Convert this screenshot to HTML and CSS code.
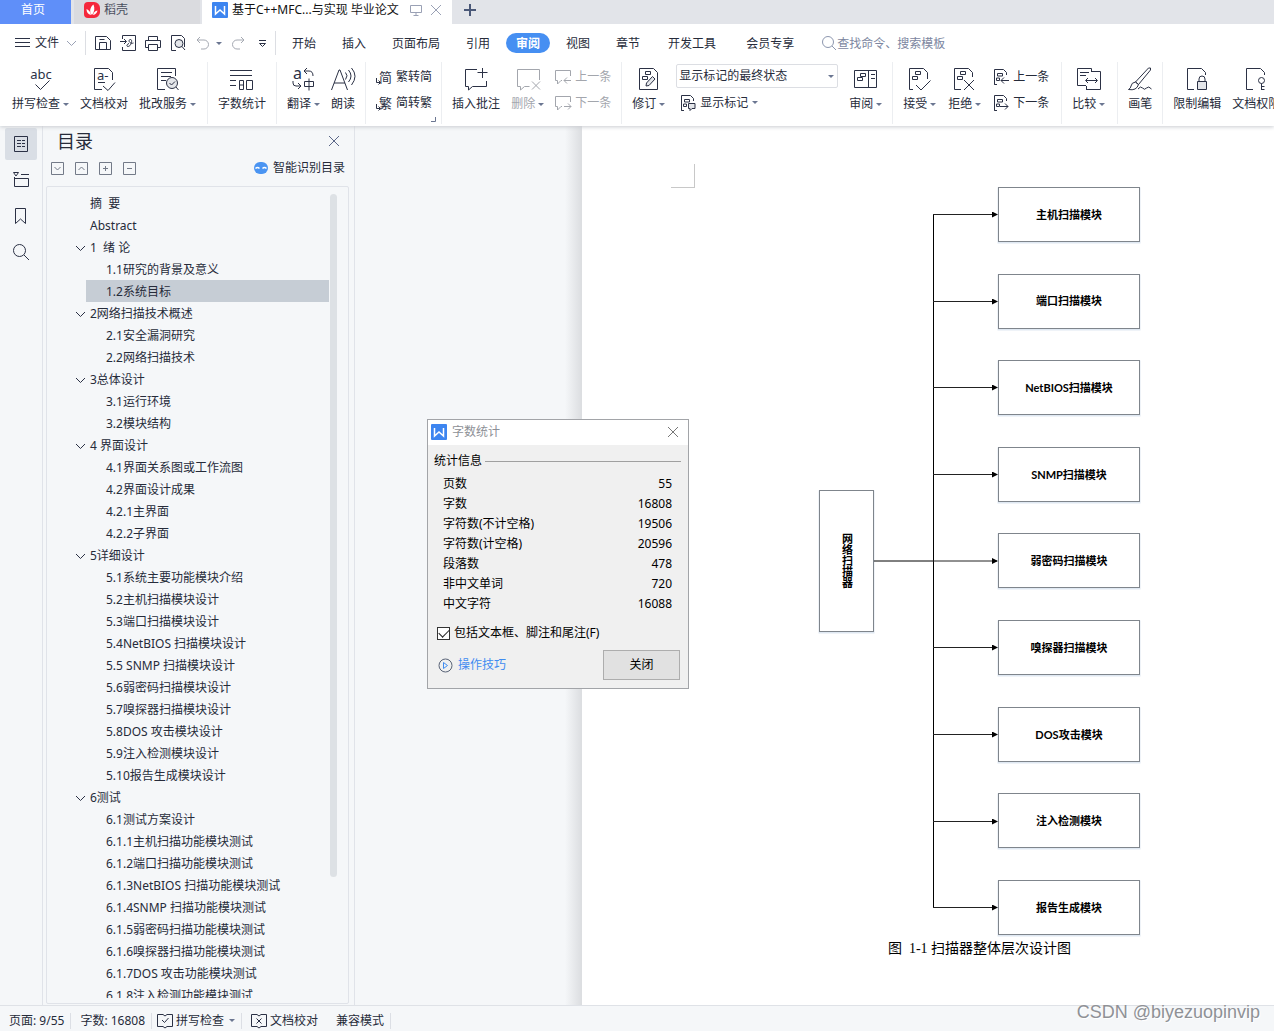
FILE: index.html
```html
<!DOCTYPE html>
<html lang="zh-CN">
<head>
<meta charset="utf-8">
<title>字数统计</title>
<link rel="stylesheet" href="styles.css">
</head>
<body>
<svg class="sprite" aria-hidden="true">
  <symbol id="doc-in" viewBox="0 0 16 16"><path d="M3 15.500H1.500V.5H10.500l3 3V6M1.500 15.500H4M4.500 4.500h5v2.500h-5zM3.500 9h3v2.500h-3z"/></symbol>
  <symbol id="close" viewBox="0 0 12 12"><path d="M1 1l10 10M11 1L1 11"/></symbol>
  <symbol id="chevron" viewBox="0 0 11 11"><path d="M1 3l4.500 4.500L10 3"/></symbol>
  <symbol id="logo" viewBox="0 0 16 16"><rect width="16" height="16" rx="1" fill="#3d85f0" stroke="none"/><path d="M3.500 4v8l4.500-4 4.500 4V4" stroke="#fff" stroke-width="1.500"/></symbol>
  <symbol id="bubble" viewBox="0 0 16 16"><path d="M15.500 7V1.500H.5v10h2v3.500l3.500-3.500h1"/></symbol>
</svg>

<header>
  <div class="tabs">
    <button class="tab home">首页</button>
    <button class="tab docer"><svg width="16" height="16" viewBox="0 0 16 16"><path d="M4 0h6a6 6 0 0 1 6 6v4a6 6 0 0 1-6 6H4a4 4 0 0 1-4-4V4a4 4 0 0 1 4-4z" fill="#f5283c" stroke="none"/><path d="M8 13C5 10 6 5 9.500 2.500 11 6 10.500 10 8 13zM7 13C4 12.500 2.500 10 2.500 7 5 8 6.500 10 7 13zM9 13c.5-2.500 2-4 4.500-4.500C13 11 11.500 12.500 9 13z" fill="#fff" stroke="none"/></svg>稻壳</button>
    <div class="tab doc"><svg width="16" height="16"><use href="#logo"/></svg><span class="doc-name">基于C++MFC...与实现 毕业论文</span><svg class="faint" width="12" height="12" viewBox="0 0 12 12"><path d="M.5 1.500h11v7H.5zM6 8.500v3M3.500 11.500h5"/></svg><button class="icon-btn tab-close" aria-label="关闭标签"><svg class="faint" width="12" height="12"><use href="#close"/></svg></button></div>
    <button class="icon-btn new-tab" aria-label="新建"><svg width="12" height="12" viewBox="0 0 12 12"><path d="M6 0v12M0 6h12" stroke="#4a5878" stroke-width="2"/></svg></button>
  </div>

  <div class="menubar">
    <button class="file"><svg width="15" height="12" viewBox="0 0 15 12"><path d="M0 1.500h15M0 5.500h15M0 9.500h15"/></svg>文件<svg class="faint file-arrow" width="11" height="11"><use href="#chevron"/></svg></button>
    <div class="quick">
      <button class="icon-btn" aria-label="保存"><svg width="16" height="16" viewBox="0 0 16 16"><path d="M.5 1.500h11l4 4v9H.5zM4.500 14V7.500h7V14M4.500 4.500h5"/></svg></button>
      <button class="icon-btn" aria-label="输出为PDF"><svg width="16" height="16" viewBox="0 0 16 16"><path d="M2.500 4V.5h13v15h-13V12M0 6.500h6M4 4l2.500 2.500L4 9M8 11.500c3 0 5-7 2.500-7-3 0-1 5 3 3.500M8 11.500c-2 0-1-2.500 1-3"/></svg></button>
      <button class="icon-btn" aria-label="打印"><svg width="16" height="16" viewBox="0 0 16 16"><path d="M3.500 5V1.500h9V5M3.500 12.500h-3v-7h15v7h-3M3.500 9.500h9v6h-9z"/></svg></button>
      <button class="icon-btn" aria-label="打印预览"><svg width="16" height="16" viewBox="0 0 16 16"><path d="M6 15.500H1.500V.5h10l3 3V12"/><circle cx="9" cy="8.500" r="4" fill="#e4e6ea"/><path d="M12 11.500l3 3.500"/></svg></button>
      <button class="icon-btn undo" aria-label="撤销"><svg class="dim" width="14" height="14" viewBox="0 0 14 14"><path d="M4 1L1 4l3 3M1 4h7a4.500 4.500 0 0 1 0 9H5"/></svg><i class="caret"></i></button>
      <button class="icon-btn" aria-label="恢复"><svg class="dim" width="14" height="14" viewBox="0 0 14 14"><path d="M10 1l3 3-3 3M13 4H6a4.500 4.500 0 0 0 0 9h3"/></svg></button>
      <button class="icon-btn more" aria-label="自定义"><svg width="9" height="9" viewBox="0 0 9 9"><path d="M1 1.500h7M1.500 4.500h6l-3 3z"/></svg></button>
    </div>
    <nav>
      <a href="#">开始</a><a href="#">插入</a><a href="#">页面布局</a><a href="#">引用</a><a href="#" class="current">审阅</a><a href="#">视图</a><a href="#">章节</a><a href="#" class="wide">开发工具</a><a href="#" class="wide">会员专享</a>
    </nav>
    <label class="search"><svg width="16" height="16" viewBox="0 0 16 16"><circle cx="7" cy="7" r="5.500"/><path d="M11 11l4 4"/></svg><input type="text" placeholder="查找命令、搜索模板" aria-label="查找命令"></label>
  </div>

  <div class="ribbon">
    <div class="group first">
      <button class="big"><svg width="24" height="24" viewBox="0 0 24 24"><text x="12" y="12" text-anchor="middle" class="glyph">abc</text><path d="M6.500 17.500l5 5 9-9"/></svg><span>拼写检查<i class="caret"></i></span></button>
      <button class="big"><svg width="24" height="24" viewBox="0 0 24 24"><text x="5" y="13" class="glyph">a-</text><path d="M10 22.500H2.500v-21h14l4 4V13M6 15.500h7M11 19l5 4.500 7-8"/></svg><span>文档校对</span></button>
      <button class="big"><svg width="24" height="24" viewBox="0 0 24 24"><path d="M9 22.500H1.500v-21h18V9M5 5.500h11M5 9.500h10M5 13.500h5"/><circle cx="16" cy="16" r="5.500" fill="#e4e6ea"/><path d="M20 20l2.500 3M13.500 16l2 2 3.500-3.500"/></svg><span>批改服务<i class="caret"></i></span></button>
    </div>
    <div class="group">
      <button class="big"><svg width="24" height="24" viewBox="0 0 24 24"><path d="M0 3.500h22M0 8.500h22M0 13.500h6M0 18.500h6M9.500 13.500h4v9h-4zM9.500 18h4M16.500 13.500h6v9h-6z"/></svg><span>字数统计</span></button>
    </div>
    <div class="group">
      <button class="big"><svg width="24" height="24" viewBox="0 0 24 24"><text x="1" y="12" class="glyph wide-a">a</text><path d="M15 1l-3 3 3 3M12 4h5q4 0 4 5M1 14v2q0 3 3 3h4M6 16l3 3-3 3M12.500 14.500h9v5h-9zM17 11.500v12"/></svg><span>翻译<i class="caret"></i></span></button>
      <button class="big"><svg width="24" height="24" viewBox="0 0 24 24"><path d="M.5 23l7.500-20h1l7.500 20M3 16h11M14.500 5.500q3 3 0 7M17.500 3q5 6 0 12M20.500 1q7 8 0 17"/></svg><span>朗读</span></button>
    </div>
    <div class="group convert">
      <div class="stack">
        <button class="small"><svg width="16" height="16" viewBox="0 0 16 16"><text x="3" y="13" class="han">简</text><path d="M.5 9v4.500H4M2.500 11.500l2 2-2 2"/></svg>繁转简</button>
        <button class="small"><svg width="16" height="16" viewBox="0 0 16 16"><text x="3" y="13" class="han">繁</text><path d="M.5 9v4.500H4M2.500 11.500l2 2-2 2"/></svg>简转繁</button>
      </div>
      <button class="icon-btn launcher" aria-label="更多设置"><svg width="6" height="6" viewBox="0 0 6 6"><path d="M0 4.500h4.500V0"/></svg></button>
    </div>
    <div class="group">
      <button class="big"><svg width="24" height="24" viewBox="0 0 24 24"><path d="M13 2.500H1.500v17h3v3.500l4-3.500h14V14M18.500 1v10M13.500 5.500h10"/></svg><span>插入批注</span></button>
      <button class="big off"><svg width="24" height="24" viewBox="0 0 24 24"><path d="M23.500 13V2.500h-22v17h3v3.500l4-3.500h5M16 14.500l8 8M24 14.500l-8 8"/></svg><span>删除<i class="caret"></i></span></button>
      <div class="stack">
        <button class="small off"><svg width="16" height="16" viewBox="0 0 16 16"><use href="#bubble"/><path d="M16 11.500H9M12 8.500l-3 3 3 3"/></svg>上一条</button>
        <button class="small off"><svg width="16" height="16" viewBox="0 0 16 16"><use href="#bubble"/><path d="M9 11.500h7M13 8.500l3 3-3 3"/></svg>下一条</button>
      </div>
    </div>
    <div class="group">
      <button class="big"><svg width="24" height="24" viewBox="0 0 24 24"><path d="M2.500 1.500h14l4 4v17h-18zM8.500 4.500h5v3h-5zM5.500 9.500h5v3h-5z"/><path d="M9 19l.5-3 6-6.500 2.500 2.500-6 6.500z" fill="#e4e6ea"/></svg><span>修订<i class="caret"></i></span></button>
      <div class="stack">
        <div class="select"><select aria-label="显示状态"><option>显示标记的最终状态</option></select><i class="caret"></i></div>
        <button class="small markup"><svg width="16" height="16" viewBox="0 0 16 16"><use href="#doc-in"/><path d="M8.500 8.500h6.500v5h-3l-2 2v-2H8.500z" fill="#e4e6ea"/></svg>显示标记<i class="caret"></i></button>
      </div>
      <button class="big"><svg width="24" height="24" viewBox="0 0 24 24"><path d="M.5 3.500h22v17H.5zM14.500 3.500v17M6.500 6.500h5v3h-5zM3.500 10.500h5v3h-5zM17 7.500h4M17 11.500h4"/></svg><span>审阅<i class="caret"></i></span></button>
    </div>
    <div class="group roomy">
      <button class="big"><svg width="24" height="24" viewBox="0 0 24 24"><path d="M5 22.500H1.500v-21h14l4 4V12M7.500 4.500h5v3h-5zM4.500 9.500h5v3h-5zM8 18l5 5 9.500-9.500"/></svg><span>接受<i class="caret"></i></span></button>
      <button class="big"><svg width="24" height="24" viewBox="0 0 24 24"><path d="M8 22.500H1.500v-21h14l4 4V10M7.500 4.500h5v3h-5zM4.500 9.500h5v3h-5zM11 13l10 10M21 13L11 23"/></svg><span>拒绝<i class="caret"></i></span></button>
      <div class="stack">
        <button class="small"><svg width="16" height="16" viewBox="0 0 16 16"><use href="#doc-in"/><path d="M16 11.500H8M11 8.500l-3 3 3 3"/></svg>上一条</button>
        <button class="small"><svg width="16" height="16" viewBox="0 0 16 16"><use href="#doc-in"/><path d="M7 11.500h8M12 8.500l3 3-3 3"/></svg>下一条</button>
      </div>
    </div>
    <div class="group roomy">
      <button class="big"><svg width="24" height="24" viewBox="0 0 24 24"><path d="M9 18.500H.5v-17h14V5M9 22.500h14.500V4.500H15M9.500 22.500V19M3 5.500h9M3 8.500h6M9 13.500h11M11 11l-2.500 2.500L11 16M18 11l2.500 2.500L18 16"/></svg><span>比较<i class="caret"></i></span></button>
    </div>
    <div class="group">
      <button class="big"><svg width="24" height="24" viewBox="0 0 24 24"><path d="M7.500 15L20.500 1q3-1 2 2L10.500 17.500zM7.500 15q-4 .5-4.500 4 0 2-2.500 3.500 8 1.500 10-5zM10 22q2.500-3.500 4.500-1t4 0 5 1"/></svg><span>画笔</span></button>
    </div>
    <div class="group last">
      <button class="big"><svg width="24" height="24" viewBox="0 0 24 24"><path d="M9 22.500H2.500v-21h14l4 4V8"/><path d="M12.500 14.500h9v8h-9z" fill="#e4e6ea"/><path d="M14 14.500V12a3 3 0 0 1 6 0v2.500"/></svg><span>限制编辑</span></button>
      <button class="big"><svg width="24" height="24" viewBox="0 0 24 24"><path d="M9 22.500H2.500v-21h14l4 4V8"/><circle cx="17.500" cy="13.500" r="3"/><path d="M17.500 16.500V23M17.500 19.500h3M17.500 22.500h3"/></svg><span>文档权限</span></button>
    </div>
  </div>
</header>

<main>
  <aside class="rail">
    <button class="icon-btn active" aria-label="目录"><svg width="16" height="16" viewBox="0 0 16 16"><path d="M1.500.5h13v15h-13zM4 4.500h4M9 4.500h3M4 7.500h4M9 7.500h3M4 10.500h4M9 10.500h3"/></svg></button>
    <button class="icon-btn" aria-label="章节"><svg width="16" height="16" viewBox="0 0 16 16"><path d="M.5.5h5L3 4zM8 2.500h8M1.500 5v9.500h14v-8h-14"/></svg></button>
    <button class="icon-btn" aria-label="书签"><svg width="16" height="16" viewBox="0 0 16 16"><path d="M2.500.5h10v15l-5-4.500-5 4.500z"/></svg></button>
    <button class="icon-btn" aria-label="查找"><svg width="16" height="16" viewBox="0 0 16 16"><circle cx="6.500" cy="6.500" r="6"/><path d="M11 11l5 5"/></svg></button>
  </aside>

  <section class="outline">
    <div class="outline-head"><h2>目录</h2><button class="icon-btn" aria-label="关闭目录"><svg width="12" height="12"><use href="#close"/></svg></button></div>
    <div class="outline-tools">
      <button class="icon-btn" aria-label="展开"><svg width="13" height="13" viewBox="0 0 13 13"><path d="M.5.5h12v12H.5zM3.500 5l3 3 3-3"/></svg></button>
      <button class="icon-btn" aria-label="收起"><svg width="13" height="13" viewBox="0 0 13 13"><path d="M.5.5h12v12H.5zM3.500 8l3-3 3 3"/></svg></button>
      <button class="icon-btn" aria-label="增加"><svg width="13" height="13" viewBox="0 0 13 13"><path d="M.5.5h12v12H.5zM4 6.500h5M6.500 4v5"/></svg></button>
      <button class="icon-btn" aria-label="减少"><svg width="13" height="13" viewBox="0 0 13 13"><path d="M.5.5h12v12H.5zM4 6.500h5"/></svg></button>
      <button class="smart"><svg width="14" height="12" viewBox="0 0 14 12"><rect width="14" height="12" rx="6" fill="#4a94f2" stroke="none"/><path d="M1.500 6.500q2-2 4 0M8.500 6.500q2-2 4 0" stroke="#fff" stroke-width="1.500"/></svg>智能识别目录</button>
    </div>
    <div class="tree-box">
      <ul class="tree">
        <li><a href="#">摘&nbsp; 要</a></li>
        <li><a href="#">Abstract</a></li>
        <li class="open"><svg width="11" height="11"><use href="#chevron"/></svg><a href="#">1&nbsp; 绪 论</a></li>
        <li class="sub"><a href="#">1.1研究的背景及意义</a></li>
        <li class="sub"><a href="#" class="selected">1.2系统目标</a></li>
        <li class="open"><svg width="11" height="11"><use href="#chevron"/></svg><a href="#">2网络扫描技术概述</a></li>
        <li class="sub"><a href="#">2.1安全漏洞研究</a></li>
        <li class="sub"><a href="#">2.2网络扫描技术</a></li>
        <li class="open"><svg width="11" height="11"><use href="#chevron"/></svg><a href="#">3总体设计</a></li>
        <li class="sub"><a href="#">3.1运行环境</a></li>
        <li class="sub"><a href="#">3.2模块结构</a></li>
        <li class="open"><svg width="11" height="11"><use href="#chevron"/></svg><a href="#">4 界面设计</a></li>
        <li class="sub"><a href="#">4.1界面关系图或工作流图</a></li>
        <li class="sub"><a href="#">4.2界面设计成果</a></li>
        <li class="sub"><a href="#">4.2.1主界面</a></li>
        <li class="sub"><a href="#">4.2.2子界面</a></li>
        <li class="open"><svg width="11" height="11"><use href="#chevron"/></svg><a href="#">5详细设计</a></li>
        <li class="sub"><a href="#">5.1系统主要功能模块介绍</a></li>
        <li class="sub"><a href="#">5.2主机扫描模块设计</a></li>
        <li class="sub"><a href="#">5.3端口扫描模块设计</a></li>
        <li class="sub"><a href="#">5.4NetBIOS 扫描模块设计</a></li>
        <li class="sub"><a href="#">5.5 SNMP 扫描模块设计</a></li>
        <li class="sub"><a href="#">5.6弱密码扫描模块设计</a></li>
        <li class="sub"><a href="#">5.7嗅探器扫描模块设计</a></li>
        <li class="sub"><a href="#">5.8DOS 攻击模块设计</a></li>
        <li class="sub"><a href="#">5.9注入检测模块设计</a></li>
        <li class="sub"><a href="#">5.10报告生成模块设计</a></li>
        <li class="open"><svg width="11" height="11"><use href="#chevron"/></svg><a href="#">6测试</a></li>
        <li class="sub"><a href="#">6.1测试方案设计</a></li>
        <li class="sub"><a href="#">6.1.1主机扫描功能模块测试</a></li>
        <li class="sub"><a href="#">6.1.2端口扫描功能模块测试</a></li>
        <li class="sub"><a href="#">6.1.3NetBIOS 扫描功能模块测试</a></li>
        <li class="sub"><a href="#">6.1.4SNMP 扫描功能模块测试</a></li>
        <li class="sub"><a href="#">6.1.5弱密码扫描功能模块测试</a></li>
        <li class="sub"><a href="#">6.1.6嗅探器扫描功能模块测试</a></li>
        <li class="sub"><a href="#">6.1.7DOS 攻击功能模块测试</a></li>
        <li class="sub"><a href="#">6.1.8注入检测功能模块测试</a></li>
      </ul>
      <div class="scroll"><div class="thumb"></div></div>
    </div>
  </section>

  <div class="desk"></div>

  <article class="page">
    <div class="corner"></div>
    <figure>
      <svg class="diagram" width="324" height="752" viewBox="0 0 324 752">
        <defs><marker id="arrow" markerUnits="userSpaceOnUse" markerWidth="6" markerHeight="6" refX="5" refY="3" orient="auto"><path d="M0 0l6 3-6 3z" class="tip"/></marker></defs>
        <g class="shade">
          <rect x="1.500" y="305.500" width="54" height="141"/>
          <rect x="180.500" y="2.500" width="141" height="54"/><rect x="180.500" y="89.500" width="141" height="54"/><rect x="180.500" y="175.500" width="141" height="54"/><rect x="180.500" y="262.500" width="141" height="54"/><rect x="180.500" y="348.500" width="141" height="54"/><rect x="180.500" y="435.500" width="141" height="54"/><rect x="180.500" y="522.500" width="141" height="54"/><rect x="180.500" y="608.500" width="141" height="54"/><rect x="180.500" y="695.500" width="141" height="54"/>
        </g>
        <g class="node">
          <rect x="1.500" y="304.500" width="54" height="141"/>
          <rect x="180.500" y="1.500" width="141" height="54"/><rect x="180.500" y="88.500" width="141" height="54"/><rect x="180.500" y="174.500" width="141" height="54"/><rect x="180.500" y="261.500" width="141" height="54"/><rect x="180.500" y="347.500" width="141" height="54"/><rect x="180.500" y="434.500" width="141" height="54"/><rect x="180.500" y="521.500" width="141" height="54"/><rect x="180.500" y="607.500" width="141" height="54"/><rect x="180.500" y="694.500" width="141" height="54"/>
        </g>
        <path class="trunk" d="M56 375h59.500M115.500 28v694"/>
        <g class="wire">
          <path d="M115 28.500h64"/><path d="M115 115.500h64"/><path d="M115 201.500h64"/><path d="M115 288.500h64"/><path d="M115 375h64"/><path d="M115 461.500h64"/><path d="M115 548.500h64"/><path d="M115 635.500h64"/><path d="M115 721.500h64"/>
        </g>
        <g class="names">
          <text x="29" y="375" class="upright">网络扫描器</text>
          <text x="251" y="33">主机扫描模块</text><text x="251" y="119">端口扫描模块</text><text x="251" y="206">NetBIOS扫描模块</text><text x="251" y="293">SNMP扫描模块</text><text x="251" y="379">弱密码扫描模块</text><text x="251" y="466">嗅探器扫描模块</text><text x="251" y="553">DOS攻击模块</text><text x="251" y="639">注入检测模块</text><text x="251" y="726">报告生成模块</text>
        </g>
      </svg>
      <figcaption>图&nbsp; 1-1 扫描器整体层次设计图</figcaption>
    </figure>
  </article>
</main>

<footer>
  <span class="cell">页面: 9/55</span>
  <span class="cell">字数: 16808</span>
  <button class="cell spell"><svg width="16" height="16" viewBox="0 0 16 16"><path d="M6 1.500H.5v12H6l2 1.500 2-1.500h5.500v-12H10L8 3 6 1.500zM5 7l2.500 2.500L11.500 5"/></svg>拼写检查<i class="caret"></i></button>
  <button class="cell proof"><svg width="16" height="16" viewBox="0 0 16 16"><path d="M6 1.500H.5v12H6l2 1.500 2-1.500h5.500v-12H10L8 3 6 1.500zM5.500 5.500l5 5M10.500 5.500l-5 5"/></svg>文档校对</button>
  <span class="cell mode">兼容模式</span>
</footer>

<div class="dialog" role="dialog" aria-labelledby="dialog-title">
  <div class="dialog-head"><svg width="16" height="16"><use href="#logo"/></svg><span id="dialog-title">字数统计</span><button class="icon-btn" aria-label="关闭窗口"><svg width="12" height="12"><use href="#close"/></svg></button></div>
  <div class="dialog-body">
    <div class="legend">统计信息</div>
    <table>
      <tr><th scope="row">页数</th><td>55</td></tr>
      <tr><th scope="row">字数</th><td>16808</td></tr>
      <tr><th scope="row">字符数(不计空格)</th><td>19506</td></tr>
      <tr><th scope="row">字符数(计空格)</th><td>20596</td></tr>
      <tr><th scope="row">段落数</th><td>478</td></tr>
      <tr><th scope="row">非中文单词</th><td>720</td></tr>
      <tr><th scope="row">中文字符</th><td>16088</td></tr>
    </table>
    <label class="include"><input type="checkbox" checked>包括文本框、脚注和尾注(F)</label>
    <div class="actions">
      <a href="#"><svg width="15" height="15" viewBox="0 0 15 15"><circle cx="7.500" cy="7.500" r="6.500" stroke="#5a6478"/><path d="M5.500 4.500v6l4-3z" stroke="#3f8cf0"/></svg>操作技巧</a>
      <button class="ok">关闭</button>
    </div>
  </div>
</div>

<div class="watermark">CSDN @biyezuopinvip</div>
</body>
</html>
```

FILE: styles.css
```css
* { box-sizing: border-box; }

body {
  margin: 0;
  height: 100vh;
  display: flex;
  flex-direction: column;
  overflow: hidden;
  position: relative;
  background: #f5f7f9;
  color: #262b3a;
  font: 12px/16px "Noto Sans", "Noto Sans CJK SC", sans-serif;
}

button, input, select { font: inherit; color: inherit; }
button { border: 0; padding: 0; background: none; white-space: nowrap; }
a { color: inherit; text-decoration: none; }
svg { display: block; flex: none; fill: none; stroke: #2b3145; stroke-width: 1; overflow: visible; }
.sprite { position: absolute; width: 0; height: 0; }
.icon-btn { display: flex; align-items: center; justify-content: center; flex: none; }
.faint { stroke: #9aa1b5; }
.dim { stroke: #a5a9b2; }

.caret {
  flex: none;
  width: 6px;
  border: solid transparent;
  border-width: 3px 3px 0;
  border-top-color: #6b7691;
}

/* Document tabs */
header { flex: none; background: #fff; position: relative; z-index: 1; box-shadow: 0 1px 4px #c9ccd1; }
.tabs { display: flex; height: 24px; background: #e2e4e9; }
.tab { display: flex; align-items: center; padding-bottom: 5px; height: 24px; }
.home { width: 71px; justify-content: center; padding-right: 5px; background: #5f8ff9; color: #fff; margin-right: 3px; }
.docer { width: 126px; padding-left: 10px; gap: 4px; background: #dadbdf; margin-right: 2px; color: #4a4f5e; }
.doc { width: 250px; padding-left: 10px; gap: 4px; background: #fff; color: #111; }
.doc-name { white-space: nowrap; margin-right: 7px; }
.tab-close { margin-left: 4px; }
.new-tab { width: 36px; height: 19px; }

/* Menu bar */
.menubar { display: flex; align-items: center; height: 38px; }
.file { display: flex; align-items: center; gap: 5px; width: 86px; height: 24px; padding-left: 15px; border-right: 1px solid #dcdee3; }
.file-arrow { margin-left: 2px; }
.quick { display: flex; align-items: center; gap: 9px; width: 190px; height: 24px; padding-left: 9px; border-right: 1px solid #dcdee3; }
.undo { gap: 6px; margin-left: 1px; }
.more { margin-left: 4px; }
nav { display: flex; align-items: center; padding-left: 3px; }
nav a { padding: 3px 13px 1px; white-space: nowrap; }
nav .current { padding: 3px 10px 1px; margin: 0 3px; border-radius: 10px; background: #468ff2; color: #fff; font-weight: bold; }
nav .wide { padding: 3px 15px 1px; }
.search { display: flex; align-items: center; padding-left: 12px; flex: 1; }
.search svg { stroke: #8d97af; }
.search input { flex: 1; min-width: 0; border: 0; padding: 2px 0 0; background: none; outline: 0; }
.search input::placeholder { color: #7c86a0; opacity: 1; }

/* Ribbon */
.ribbon { display: flex; height: 64px; overflow: hidden; }
.group { display: flex; align-items: flex-start; flex: none; gap: 11px; height: 62px; padding: 0 10px; border-right: 1px solid #eceef1; position: relative; }
.first { padding: 0 11px 0 12px; }
.convert { padding-right: 9px; }
.roomy { gap: 12px; padding-right: 12px; }
.last { border: 0; }
.big { display: flex; flex-direction: column; align-items: center; gap: 5px; padding-top: 5px; flex: none; }
.big span { display: flex; align-items: center; gap: 3px; }
.stack { display: flex; flex-direction: column; padding-top: 1px; }
.small { display: flex; align-items: center; gap: 4px; height: 26px; padding-top: 1px; }
.off { color: #a3a6ad; }
.off svg { stroke: #a3a6ad; }
.markup { padding-left: 4px; }
.glyph { font: 13px "Noto Sans", sans-serif; fill: #2b3145; stroke: none; }
.wide-a { font-size: 16px; }
.han { font: 13px "Noto Sans CJK SC", sans-serif; fill: #2b3145; stroke: none; }
.launcher { position: absolute; right: 4px; bottom: 1px; }
.launcher svg { stroke: #6b7691; }
.select { position: relative; height: 26px; padding: 1px 0; }
.select select { appearance: none; width: 162px; height: 24px; padding: 0 2px; border: 1px solid #dcdee3; border-radius: 2px; background: #fff; }
.select .caret { position: absolute; right: 4px; top: 12px; }

/* Navigation rail and outline */
main { display: flex; flex: 1; min-height: 0; }
.rail { display: flex; flex-direction: column; align-items: center; gap: 4px; flex: none; width: 43px; padding-top: 2px; border-right: 1px solid #e0e3e9; }
.rail button { width: 32px; height: 32px; border-radius: 2px; }
.rail .active { background: #d9dee5; }
.outline { display: flex; flex-direction: column; flex: none; width: 312px; padding: 0 5px 0 3px; border-right: 1px solid #e0e3e9; }
.outline-head { display: flex; align-items: center; justify-content: space-between; height: 30px; padding: 0 9px 0 11px; }
.outline-head h2 { margin: 0; font-size: 18px; font-weight: normal; line-height: 24px; }
.outline-head svg { stroke: #5b6788; }
.outline-tools { display: flex; align-items: center; gap: 11px; height: 24px; margin-bottom: 6px; padding: 0 4px 0 5px; }
.outline-tools .icon-btn svg { stroke: #737a88; }
.smart { display: flex; align-items: center; gap: 5px; margin-left: auto; }
.tree-box { display: flex; flex: 1; min-height: 0; margin-bottom: 1px; padding: 5px 11px 5px 0; border: 1px solid #e0e3e9; border-radius: 2px; }
.tree { flex: 1; margin: 0; padding: 0; list-style: none; overflow: hidden; }
.tree li { display: flex; align-items: center; height: 22px; padding-left: 39px; }
.tree li.open { padding-left: 28px; }
.tree svg { margin-top: 2px; }
.tree a { flex: 1; height: 22px; padding: 4px 0 0 4px; white-space: nowrap; }
.tree .sub a { padding-left: 20px; }
.tree .selected { background: #c6cdd5; }
.scroll { width: 7px; margin-left: 1px; padding-top: 2px; }
.thumb { height: 85%; border-radius: 4px; background: #dde1e5; }

/* Document area */
.desk { flex: none; width: 227px; background: linear-gradient(to right, #f5f7f9 210px, #dbdde0); }
.page { display: grid; grid-template-columns: 113px 1fr 10px; flex: 1; min-width: 0; padding-top: 38px; background: #fff; overflow: hidden; }
.corner { justify-self: end; width: 24px; height: 24px; border: solid #c8c8c8; border-width: 0 1px 1px 0; }
figure { display: flex; flex-direction: column; align-items: center; margin: 0; padding-top: 22px; }
.shade rect { fill: none; stroke: #dfe8f2; stroke-width: 2; }
.node rect { fill: #fff; stroke: #7f858c; }
.trunk { stroke: #000; }
.wire path { stroke: #222; marker-end: url(#arrow); }
.wire .tip, .tip { fill: #000; stroke: none; }
.names text { font: bold 11px Lato, "Noto Sans CJK SC", sans-serif; fill: #000; stroke: none; text-anchor: middle; }
.names .upright { writing-mode: vertical-rl; }
figcaption { color: #000; font: 14px/22px "Liberation Serif", "Noto Sans CJK SC", serif; }

/* Status bar */
footer { display: flex; align-items: center; flex: none; height: 26px; padding: 4px 0 0; border-top: 1px solid #dfe2e7; }
.cell { display: flex; align-items: center; gap: 3px; height: 16px; padding: 0 6px 0 9px; border-right: 1px solid #dcdfe5; white-space: nowrap; }
.spell { padding-left: 5px; }
.spell .caret { margin-left: 2px; }
.proof { border: 0; padding-right: 9px; }

/* Word count dialog */
.dialog { position: absolute; z-index: 2; left: 427px; top: 419px; width: 262px; border: 1px solid #a2a4a8; background: #f0f0f0; color: #000; }
.dialog-head { display: flex; align-items: center; gap: 5px; height: 25px; padding: 0 9px 1px 3px; background: #fff; color: #8d9096; }
.dialog-head button { margin-left: auto; }
.dialog-head .icon-btn svg { stroke: #777; }
.dialog-body { padding: 8px 7px 8px 6px; }
.legend { display: flex; align-items: center; gap: 3px; }
.legend::after { content: ""; flex: 1; border-top: 1px solid #a0a0a0; }
table { width: 100%; margin: 5px 0 11px; border-collapse: collapse; }
th, td { height: 20px; padding: 0 9px; font-weight: normal; line-height: 20px; text-align: left; }
td { text-align: right; }
.include { display: flex; align-items: center; gap: 4px; padding-left: 3px; }
.include input { appearance: none; display: grid; place-items: center; width: 13px; height: 13px; margin: 0; border: 1px solid #333; background: #fff; }
.include input::after { content: ""; width: 9px; height: 5px; border: solid #222; border-width: 0 0 1px 1px; transform: translateY(-1px) rotate(-45deg); }
.actions { display: flex; align-items: center; justify-content: space-between; margin-top: 9px; padding: 0 1px 0 4px; }
.actions a { display: flex; align-items: center; gap: 5px; color: #3f8cf0; }
.ok { width: 77px; height: 30px; border: 1px solid #adadad; background: #e1e1e1; }

.watermark { position: absolute; z-index: 3; right: 14px; bottom: 7px; color: #8f9196; font: 18px/24px "Liberation Sans", sans-serif; text-shadow: 1px 1px 0 #fff; }
```
